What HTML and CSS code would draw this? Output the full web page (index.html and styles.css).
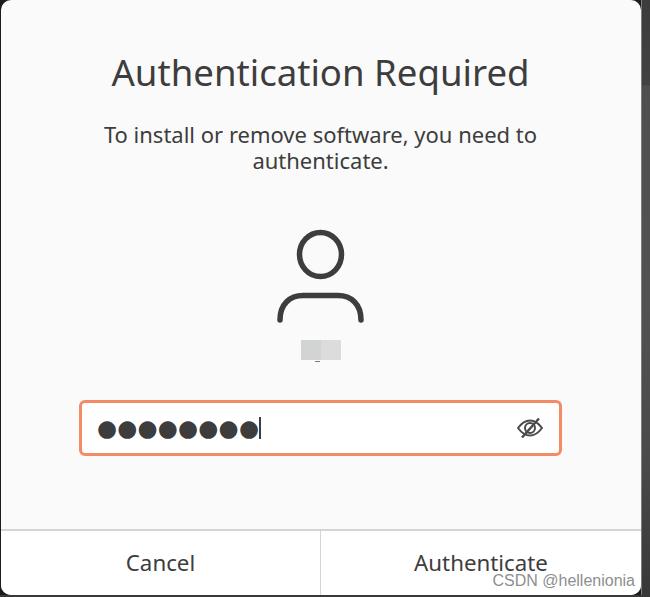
FILE: index.html
```html
<!DOCTYPE html>
<html lang="en">
<head>
    <meta charset="UTF-8">
    <meta name="viewport" content="width=device-width, initial-scale=1.0">
    <title>Authentication Required</title>
    <link rel="stylesheet" href="styles.css">
</head>
<body>
    <div class="frame">
        <div class="dialog">
            <div class="content">
                <h1>Authentication Required</h1>
                <p class="message">To install or remove software, you need to authenticate.</p>
                <svg class="avatar" width="90" height="95" viewBox="0 0 90 95" fill="none" stroke="#3d3d3d" stroke-width="5.5" stroke-linecap="round">
                    <ellipse cx="44.5" cy="26.5" rx="21" ry="22"></ellipse>
                    <path d="M4 92 C4 76 14 67.5 27 67.5 H62 C75 67.5 85 76 85 92"></path>
                </svg>
                <div class="user-name">
                    <span class="blur-a"></span><span class="blur-b"></span>
                </div>
                <div class="password-field">
                    <span class="dots">●●●●●●●●</span><span class="caret"></span>
                    <svg class="eye" width="26" height="20" viewBox="0 0 26 20" fill="none" stroke="#4a4a4a" stroke-width="2">
                        <path d="M1 10 C5 4.5 9 2.5 13 2.5 C17 2.5 21 4.5 25 10 C21 15.5 17 17.5 13 17.5 C9 17.5 5 15.5 1 10 Z"></path>
                        <circle cx="13" cy="10" r="5"></circle>
                        <path d="M22 0.5 L5 19.5" stroke-width="2.4"></path>
                    </svg>
                </div>
            </div>
            <div class="buttons">
                <button class="cancel">Cancel</button>
                <button class="confirm">Authenticate</button>
            </div>
        </div>
    </div>
    <div class="watermark">CSDN @hellenionia</div>
</body>
</html>
```

FILE: styles.css
```css
body {
    margin: 0;
    width: 650px;
    height: 597px;
    overflow: hidden;
    position: relative;
    background: linear-gradient(#3c3c3c 0, #424242 85px, #4f4f4f 86px, #525252 300px, #4a4a4a 460px, #383838 597px);
    font-family: "Noto Sans", sans-serif;
    color: #3d3d3d;
}
.frame {
    width: 642px;
    height: 595px;
    padding-left: 1px;
    background-color: #1c1c1c;
    border-right: 1px solid #7d7d7d;
    box-sizing: border-box;
}
.dialog {
    height: 595px;
    display: flex;
    flex-direction: column;
    background-color: #fafafa;
    border-radius: 10px;
    overflow: hidden;
}
.content {
    flex: 1;
    padding-right: 1px;
    display: flex;
    flex-direction: column;
    align-items: center;
}
h1 {
    margin: 47px 0 0;
    font-size: 36.6px;
    font-weight: 400;
    line-height: 50px;
}
.message {
    width: 480px;
    margin: 24px 0 0;
    font-size: 22px;
    line-height: 26px;
    text-align: center;
}
.avatar {
    margin-top: 55px;
}
.user-name {
    display: flex;
    margin-top: 17px;
    height: 20px;
}
.blur-a {
    position: relative;
    width: 20px;
    background-color: #d2d4d3;
}
.blur-a::after {
    content: "";
    position: absolute;
    left: 14px;
    bottom: -2px;
    width: 5px;
    height: 1px;
    background-color: #777777;
}
.blur-b {
    width: 20px;
    background-color: #dcdcdc;
}
.password-field {
    width: 483px;
    height: 56px;
    margin-top: 40px;
    padding: 0 16px 0 15px;
    display: flex;
    align-items: center;
    box-sizing: border-box;
    background-color: #ffffff;
    border: 3px solid #f48a66;
    border-radius: 6px;
}
.dots {
    font-family: "DejaVu Sans", sans-serif;
    font-size: 23px;
    letter-spacing: 0.2px;
}
.caret {
    width: 2px;
    height: 22px;
    background-color: #3d3d3d;
}
.eye {
    margin-left: auto;
}
.buttons {
    height: 64px;
    display: flex;
    border-top: 2px solid #d4d4d4;
}
.buttons button {
    padding: 0 0 1px;
    border: none;
    background-color: #ffffff;
    font-family: inherit;
    font-size: 22.3px;
    color: #3d3d3d;
}
.cancel {
    width: 319px;
}
.confirm {
    flex: 1;
    border-left: 1px solid #d4d4d4 !important;
}
.watermark {
    position: absolute;
    right: 15px;
    bottom: 7px;
    font-family: "Liberation Sans", sans-serif;
    font-size: 16px;
    color: #8e8e8e;
}
```
